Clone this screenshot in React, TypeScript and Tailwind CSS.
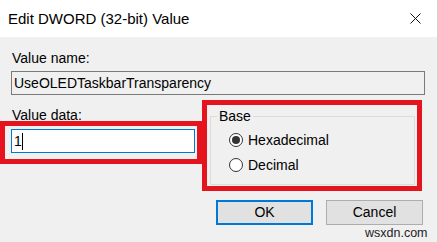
import React from "react";

function Radio({ checked, label }: { checked: boolean; label: string }) {
  return (
    <div className="flex items-center h-[16px]">
      <span className="w-[14px] h-[14px] rounded-full border border-[#333333] bg-white flex items-center justify-center">
        {checked && <span className="w-[8px] h-[8px] rounded-full bg-[#333333]" />}
      </span>
      <span className="ml-[5px] text-[14px] leading-[16px]">{label}</span>
    </div>
  );
}

export default function App() {
  return (
    <div
      className="relative w-[438px] h-[242px] bg-[#f0f0f0] border-r border-[#d0d0d0] text-black overflow-hidden"
      style={{ fontFamily: '"Liberation Sans", Arial, sans-serif' }}
    >
      <div className="h-[37px] bg-white flex items-center justify-between pl-[8px] pr-[16px]">
        <span className="text-[15px] leading-[18px]">Edit DWORD (32-bit) Value</span>
        <svg width="11" height="11" viewBox="0 0 11 11" className="block">
          <path d="M0.5 0.5 L10.5 10.5 M10.5 0.5 L0.5 10.5" stroke="#111" strokeWidth="1" fill="none" />
        </svg>
      </div>

      <div className="pt-[13px]">
        <div className="ml-[12px] text-[14px] leading-[16px]">Value name:</div>
        <div className="ml-[11px] mt-[5px] w-[414px] h-[24px] border border-[#7a7a7a] bg-[#f0f0f0] flex items-center pl-[2px] text-[14px]">
          UseOLEDTaskbarTransparency
        </div>

        <div className="flex items-start mt-[12px] h-[78px]">
          <div className="ml-[11px] w-[184px]">
            <div className="ml-[1px] text-[14px] leading-[16px]">Value data:</div>
            <div className="mt-[6px] h-[24px] border border-[#0078d7] bg-white flex items-center pl-[2px] text-[14px]">
              <span>1</span>
              <span className="w-[1px] h-[17px] bg-black" />
            </div>
          </div>
          <fieldset className="ml-[15px] mt-[1px] w-[205px] h-[77px] border border-[#dcdcdc]">
            <legend className="ml-[6px] px-[2px] text-[14px] leading-[16px]">Base</legend>
            <div className="mt-[8px] ml-[18px] flex flex-col gap-[9px]">
              <Radio checked label="Hexadecimal" />
              <Radio checked={false} label="Decimal" />
            </div>
          </fieldset>
        </div>

        <div className="flex justify-end gap-[13px] mt-[15px] pr-[14px]">
          <button className="w-[97px] h-[25px] bg-[#e1e1e1] border-2 border-[#0078d7] text-[14px] flex items-center justify-center">
            OK
          </button>
          <button className="w-[97px] h-[25px] bg-[#e1e1e1] border border-[#adadad] text-[14px] flex items-center justify-center">
            Cancel
          </button>
        </div>
      </div>

      <div className="absolute left-0 top-[121px] w-[202px] h-[43px] border-[5px] border-[#e4131e]" />
      <div className="absolute left-[202px] top-[100px] w-[220px] h-[91px] border-[5px] border-[#e4131e]" />

      <div className="absolute left-[365px] top-[226px] text-[12.5px] leading-[14px] text-[#222]">wsxdn.com</div>
    </div>
  );
}
